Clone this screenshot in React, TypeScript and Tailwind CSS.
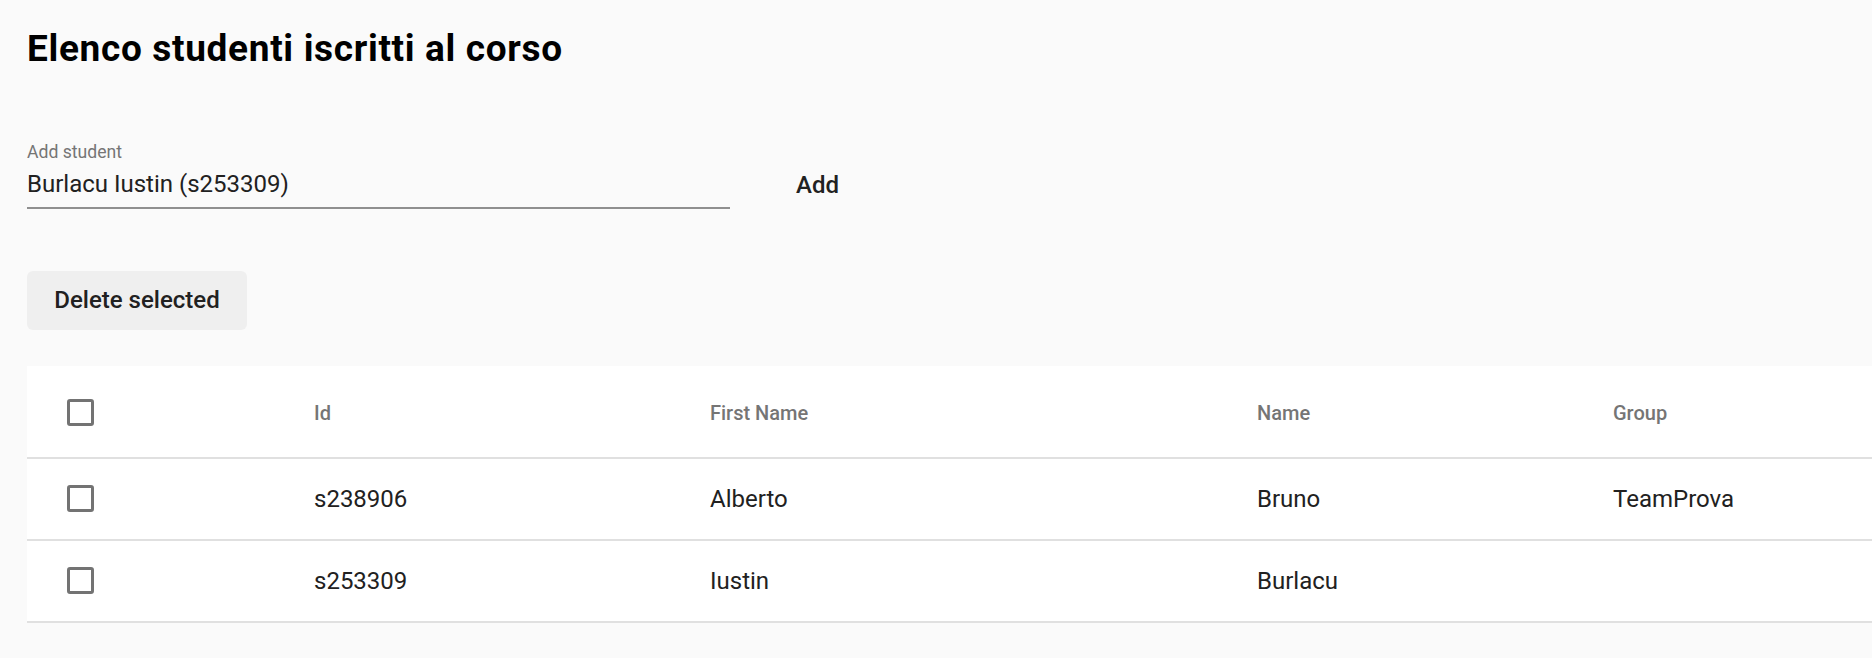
import { useState } from 'react'

type Student = { id: string; firstName: string; name: string; group: string }

const students: Student[] = [
  { id: 's238906', firstName: 'Alberto', name: 'Bruno', group: 'TeamProva' },
  { id: 's253309', firstName: 'Iustin', name: 'Burlacu', group: '' },
]

function Checkbox({ checked, onChange }: { checked: boolean; onChange: () => void }) {
  return (
    <button
      type="button"
      onClick={onChange}
      className={
        'w-[27px] h-[27px] rounded-[3px] border-[3px] ' +
        (checked ? 'border-[#3f51b5] bg-[#3f51b5]' : 'border-[#737373] bg-transparent')
      }
    />
  )
}

export default function App() {
  const [value, setValue] = useState('Burlacu Iustin (s253309)')
  const [selected, setSelected] = useState<string[]>([])

  function toggle(id: string) {
    setSelected((s) => (s.includes(id) ? s.filter((x) => x !== id) : [...s, id]))
  }

  const allSelected = selected.length === students.length

  return (
    <div className="min-h-screen bg-[#fafafa] pl-[27px] font-['Roboto',sans-serif]">
      <h2 className="pt-[27px] text-[37px] leading-[44px] font-bold tracking-[0.018em] text-black">
        Elenco studenti iscritti al corso
      </h2>

      <div className="mt-[71px] flex items-start">
        <div className="w-[703px]">
          <label className="block text-[17.6px] leading-[20px] text-[#757575]">Add student</label>
          <input
            value={value}
            onChange={(e) => setValue(e.target.value)}
            className="mt-[8px] block w-full bg-transparent text-[24px] leading-[28px] text-[#212121] outline-none"
          />
          <div className="mt-[9px] h-[1.5px] bg-[#8f8f8f]" />
        </div>
        <button className="ml-[42px] mt-[29px] px-[24px] text-[24px] leading-[28px] font-medium text-[#212121]">
          Add
        </button>
      </div>

      <button className="mt-[62px] w-[220px] h-[59px] rounded-[6px] bg-[#efefef] text-[24px] font-medium text-[#212121]">
        Delete selected
      </button>

      <div className="mt-[36px] bg-white">
        <div className="flex items-center h-[93px] pt-[3px] border-b-[2px] border-[#e0e0e0] text-[20px] font-medium text-[#757575]">
          <div className="w-[287px] pl-[40px] flex">
            <Checkbox
              checked={allSelected}
              onChange={() => setSelected(allSelected ? [] : students.map((s) => s.id))}
            />
          </div>
          <div className="w-[396px]">Id</div>
          <div className="w-[547px]">First Name</div>
          <div className="w-[356px]">Name</div>
          <div className="flex-1">Group</div>
        </div>
        {students.map((s) => (
          <div
            key={s.id}
            className="flex items-center h-[82px] border-b-[2px] border-[#e0e0e0] text-[24px] text-[#212121]"
          >
            <div className="w-[287px] pl-[40px] flex">
              <Checkbox checked={selected.includes(s.id)} onChange={() => toggle(s.id)} />
            </div>
            <div className="w-[396px]">{s.id}</div>
            <div className="w-[547px]">{s.firstName}</div>
            <div className="w-[356px]">{s.name}</div>
            <div className="flex-1">{s.group}</div>
          </div>
        ))}
      </div>
    </div>
  )
}
